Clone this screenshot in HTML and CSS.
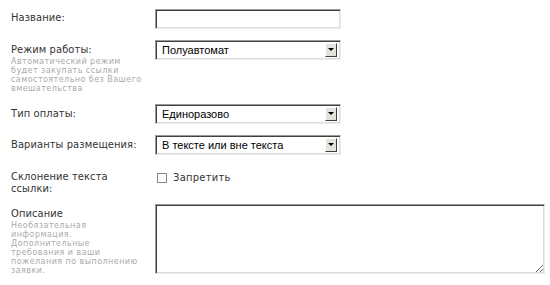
FILE: index.html
```html
<!DOCTYPE html>
<html lang="ru">
<head>
    <meta charset="UTF-8">
    <title>Новая заявка</title>
    <link rel="stylesheet" href="styles.css">
</head>
<body>
    <div class="form">
        <div class="row">
            <div class="label">Название:</div>
            <div class="field"><input class="text" type="text"></div>
        </div>

        <div class="row">
            <div class="label">
                Режим работы:
                <div class="hint">Автоматический режим будет закупать ссылки самостоятельно без Вашего вмешательства</div>
            </div>
            <div class="field">
                <div class="select">
                    <span class="value">Полуавтомат</span>
                    <span class="arrow"><svg width="6" height="4" viewBox="0 0 6 4"><path d="M0 0h6L3 3z" fill="#000"/></svg></span>
                </div>
            </div>
        </div>

        <div class="row">
            <div class="label">Тип оплаты:</div>
            <div class="field">
                <div class="select">
                    <span class="value">Единоразово</span>
                    <span class="arrow"><svg width="6" height="4" viewBox="0 0 6 4"><path d="M0 0h6L3 3z" fill="#000"/></svg></span>
                </div>
            </div>
        </div>

        <div class="row">
            <div class="label">Варианты размещения:</div>
            <div class="field">
                <div class="select">
                    <span class="value">В тексте или вне текста</span>
                    <span class="arrow"><svg width="6" height="4" viewBox="0 0 6 4"><path d="M0 0h6L3 3z" fill="#000"/></svg></span>
                </div>
            </div>
        </div>

        <div class="row row-check">
            <div class="label label-two">Склонение текста ссылки:</div>
            <div class="field">
                <label class="check"><span class="box"></span>Запретить</label>
            </div>
        </div>

        <div class="row">
            <div class="label">
                Описание
                <div class="hint">Необязательная информация. Дополнительные требования и ваши пожелания по выполнению заявки.</div>
            </div>
            <div class="field"><textarea class="area"></textarea></div>
        </div>
    </div>
</body>
</html>
```

FILE: styles.css
```css
body {
    margin: 0;
    background: #fff;
    font-family: "DejaVu Sans Condensed", "DejaVu Sans", Verdana, sans-serif;
    color: #333;
}
.form {
    padding-top: 8px;
}
.row {
    display: flex;
    align-items: flex-start;
    margin-bottom: 11px;
}
.label {
    width: 144px;
    padding-left: 11px;
    padding-top: 3px;
    font-size: 11px;
    line-height: 14px;
    letter-spacing: 0.1px;
}
.label-two {
    width: 110px;
    padding-top: 5px;
    line-height: 12px;
    margin-right: 34px;
}
.hint {
    width: 133px;
    font-family: "DejaVu Sans", Verdana, sans-serif;
    font-size: 8px;
    line-height: 9px;
    color: #aaa;
    letter-spacing: 0.45px;
}
.text,
.select,
.area {
    box-sizing: border-box;
    border: 1px solid;
    border-color: #9a9a9a #ececec #ececec #9a9a9a;
    box-shadow: inset 1px 1px 0 #404040, inset -1px -1px 0 #dcdcdc;
    background: #fff;
    outline: none;
}
.text {
    width: 186px;
    height: 20px;
    margin: 0;
}
.select {
    display: flex;
    align-items: center;
    justify-content: space-between;
    width: 186px;
    height: 20px;
    padding: 1px 3px 1px 6px;
    font-family: "Liberation Sans", Arial, sans-serif;
    font-size: 11px;
    color: #000;
}
.arrow {
    display: flex;
    align-items: center;
    justify-content: center;
    width: 12px;
    height: 14px;
    box-sizing: border-box;
    background: #e4e2dc;
    border: 1px solid;
    border-color: #fff #404040 #404040 #fff;
}
.row-check {
    margin-bottom: 9px;
}
.check {
    display: flex;
    align-items: center;
    padding-top: 5px;
    font-size: 11px;
    line-height: 14px;
    letter-spacing: 0.3px;
    color: #333;
}
.box {
    width: 8px;
    height: 8px;
    margin: 0 6px 0 2px;
    border: 1px solid #8a8a8a;
    background: #fff;
}
.area {
    display: block;
    width: 390px;
    height: 70px;
    margin: 0;
    resize: both;
}
```
